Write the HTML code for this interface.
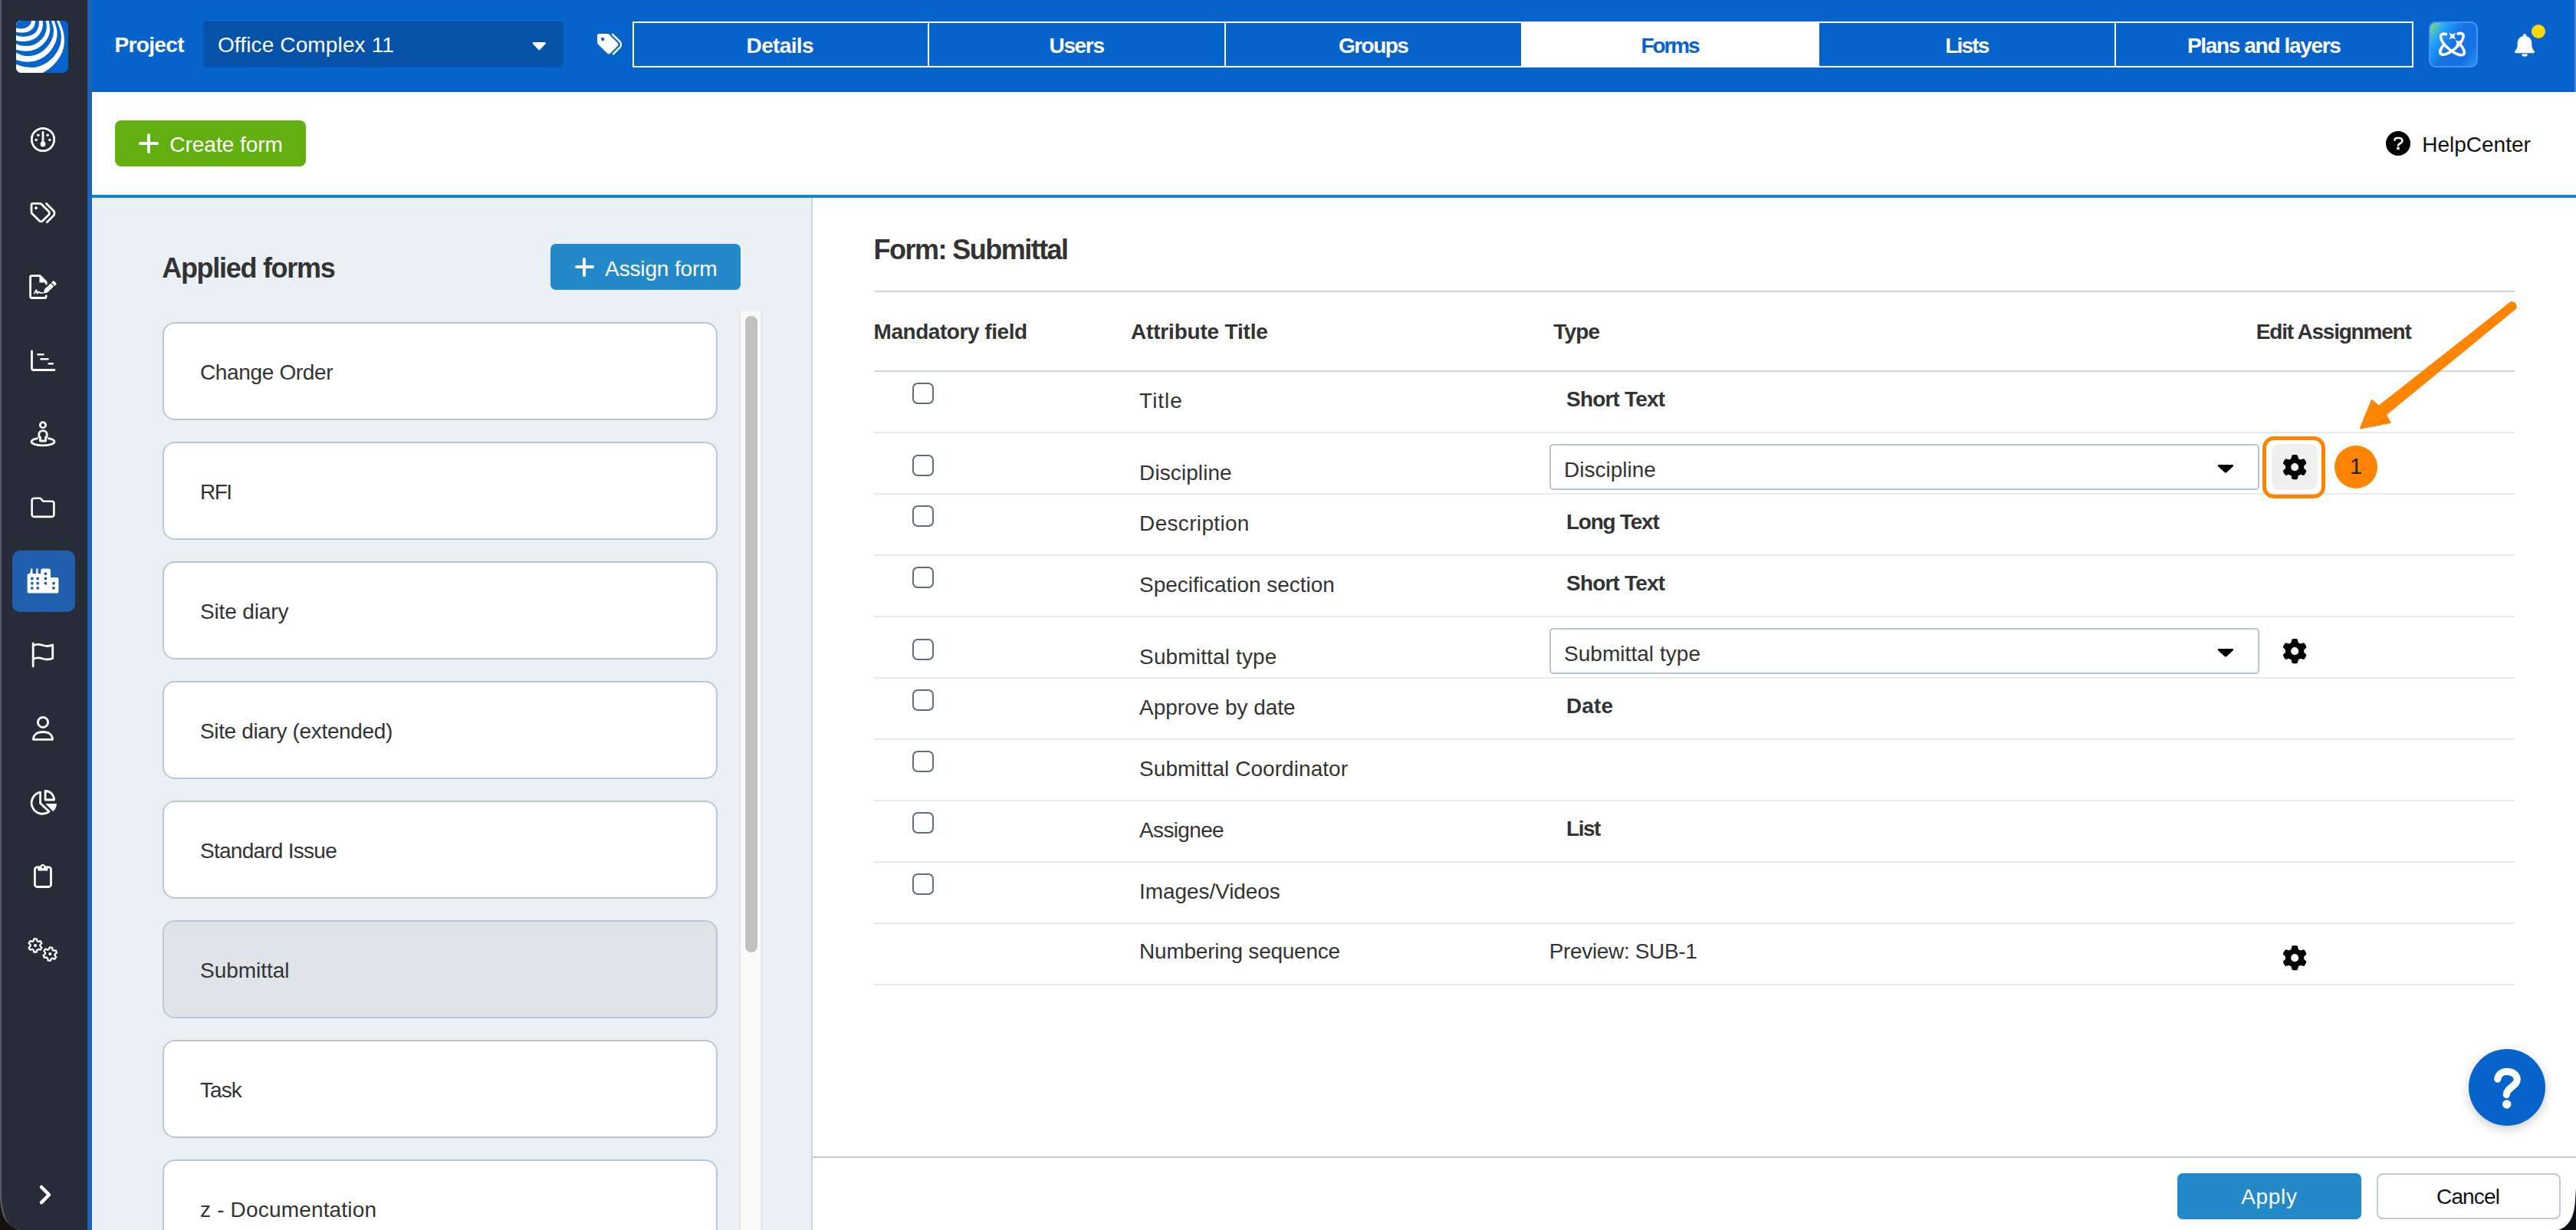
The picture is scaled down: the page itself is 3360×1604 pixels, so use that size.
<!DOCTYPE html>
<html><head><meta charset="utf-8"><title>Forms</title>
<style>
*{box-sizing:border-box;margin:0;padding:0}
html,body{width:3360px;height:1604px;overflow:hidden;background:#fff;font-family:"Liberation Sans",sans-serif}
.a{position:absolute}
.t{position:absolute;white-space:pre}
svg{position:absolute;overflow:visible}
.card{position:absolute;left:212px;width:724px;height:128px;border:2px solid #b9c8d8;border-radius:16px;background:#fff}
.ln{position:absolute;left:1140px;width:2140px;height:2px;background:#e3eaf1}
.cb{position:absolute;left:1190.200px;width:27.400px;height:27.400px;border:2px solid #5f6c7b;border-radius:7px;background:#fff}
.sel{position:absolute;left:2021px;width:926px;height:60px;border:2px solid #b7c5d3;border-radius:5px;background:#fff}
#root{position:absolute;left:0;top:0;width:3360px;height:1604px;overflow:hidden;background:#fff}
</style></head><body><div id="root">
<!-- base panels -->
<div class="a" style="left:0;top:0;width:2px;height:1604px;background:#555b63"></div>
<div class="a" style="left:2px;top:0;width:112px;height:1604px;background:#262c38"></div>
<div class="a" style="left:114px;top:0;width:6px;height:1604px;background:#1f63b5"></div>
<div class="a" style="left:120px;top:0;width:3240px;height:120px;background:#0563cb"></div>
<div class="a" style="left:120px;top:254px;width:3240px;height:4px;background:#1c84c6"></div>
<div class="a" style="left:120px;top:258px;width:940px;height:1346px;background:#ebf0f5;border-right:2px solid #c9d6e3"></div>
<!-- project selector -->
<div class="a" style="left:265px;top:28px;width:469.500px;height:60px;background:#0652a8;border-radius:5px"></div>
<svg style="left:694px;top:54.200px" width="18.600" height="12" viewBox="0 0 24 13" preserveAspectRatio="none"><path d="M2.2 1.2h19.6a1.3 1.3 0 0 1 .9 2.2l-9.6 8.6a1.6 1.6 0 0 1-2.2 0L1.3 3.4a1.3 1.3 0 0 1 .9-2.2z" fill="#fff"/></svg>
<!-- tag icon -->
<svg style="left:778px;top:43px" width="34" height="30" viewBox="0 0 34 30">
<path d="M3.2 1h11.2a3 3 0 0 1 2.1.9l10.6 10.6a3.6 3.6 0 0 1 0 5.1l-8.5 8.5a3.6 3.6 0 0 1-5.1 0L1.9 14.5A3 3 0 0 1 1 12.4V3.2A2.2 2.2 0 0 1 3.2 1z" fill="#fff"/>
<circle cx="8.1" cy="8" r="2.2" fill="#0563cb"/>
<path d="M21 1.8L30.4 11.2a5.4 5.4 0 0 1 0 7.6L22 27.4" fill="none" stroke="#fff" stroke-width="2.4" stroke-linecap="round"/>
</svg>
<!-- tabs -->
<div class="a" style="left:825px;top:28px;width:2323px;height:60px;border:2px solid #fff"></div>
<div class="a" style="left:1210px;top:28px;width:2px;height:60px;background:#fff"></div>
<div class="a" style="left:1597px;top:28px;width:2px;height:60px;background:#fff"></div>
<div class="a" style="left:1984px;top:28px;width:389px;height:60px;background:#fff"></div>
<div class="a" style="left:2758px;top:28px;width:2px;height:60px;background:#fff"></div>
<!-- AI button -->
<div class="a" style="left:3168px;top:28px;width:64px;height:60px;border:2px solid #4792f6;border-radius:9px;background:linear-gradient(125deg,#8fe26a 0%,#22a4fc 22%,#1672e2 48%,#1672e2 78%,#2a94f8 100%)"></div>
<svg style="left:3181px;top:41px" width="37" height="34" viewBox="0 0 37 34">
<g fill="none" stroke="#fff" stroke-width="3.6" stroke-linecap="round">
<path d="M9.5 3.6C5.2 2.4 2.2 3.6 2.6 7.4c.5 4.6 5.2 11.2 11.8 16.4 6.8 5.300 14.600 8.400 17.600 6.400 2.800-1.900.9-7.200-3.100-12.200"/>
<path d="M25 2.900c4.400-1.300 7.400-.2 7.100 3.500-.4 4.700-5.300 11.500-12.100 16.900C13 28.900 5.600 31.800 2.900 29.400.6 27.400 2.300 22.600 6.400 17.600"/>
</g>
<path d="M17.800 0.200l1.700 4.300 4.300 1.700-4.300 1.700-1.700 4.300-1.700-4.300-4.300-1.700 4.300-1.700z" fill="#fff" transform="rotate(45 17.800 6.200)"/>
<path d="M25.600 9.600l1.500 3.800 3.800 1.500-3.800 1.500-1.500 3.800-1.500-3.800-3.800-1.500 3.800-1.500z" fill="#fff" transform="rotate(45 25.600 14.900)"/>
</svg>
<!-- bell -->
<svg style="left:3279px;top:44px" width="28" height="30" viewBox="0 0 28 30">
<path d="M14 0a2 2 0 0 1 2 2v.9c4.300.9 7.300 4.700 7.300 9.300v2.300c0 2.800 1 5.500 2.800 7.600l.5.600a1.500 1.500 0 0 1-1.100 2.500H2.500a1.500 1.500 0 0 1-1.100-2.500l.5-.6c1.800-2.100 2.800-4.800 2.800-7.600v-2.300c0-4.600 3-8.400 7.300-9.300V2a2 2 0 0 1 2-2z" fill="#fff"/>
<path d="M10.100 26.500h7.800a3.900 3.300 0 0 1-7.800 0z" fill="#fff"/>
</svg>
<div class="a" style="left:3302px;top:32px;width:18px;height:18px;border-radius:50%;background:#fdd807"></div>
<!-- create form button -->
<div class="a" style="left:150px;top:157px;width:249px;height:60px;background:#61b00f;border-radius:8px"></div>
<div class="a" style="left:181px;top:185.300px;width:26px;height:4.200px;background:#fff;border-radius:2px"></div>
<div class="a" style="left:191.900px;top:173.900px;width:4.200px;height:26px;background:#fff;border-radius:2px"></div>
<!-- helpcenter icon -->
<div class="a" style="left:3112px;top:171px;width:32px;height:32px;border-radius:50%;background:#000"></div>
<svg style="left:3112px;top:171px" width="32" height="32" viewBox="0 0 32 32"><path d="M11.400 11.600c.4-1.700 1.800-2.600 3.400-2.600h2.600c2.300 0 4 1.600 4 3.500 0 1.500-.8 2.500-2 3.200l-2.300 1.400c-.7.400-1 .9-1 1.700" fill="none" stroke="#fff" stroke-width="2.600" stroke-linecap="round" stroke-linejoin="round"/><circle cx="16" cy="22.400" r="2" fill="#fff"/></svg>

<div class="a" style="left:3358px;top:0;width:2px;height:120px;background:#4a86d4"></div>

<!-- logo -->
<svg style="left:21px;top:27px" width="68" height="68" viewBox="0 0 68.100 68.100">
<defs><clipPath id="lg"><rect x="0" y="0" width="68.100" height="68.100" rx="6.500"/></clipPath></defs>
<g clip-path="url(#lg)">
<rect width="69" height="69" fill="#0563cb"/>
<path d="M56.3 0.0C58.0 4.2 60.2 8.6 61.3 12.7C62.4 16.8 62.9 20.6 63.0 24.4C63.1 28.2 62.8 31.9 61.9 35.5C61.0 39.1 59.4 42.9 57.8 46.1C56.1 49.2 54.1 51.7 51.9 54.3C49.8 56.8 47.8 59.0 44.9 61.3C42.0 63.6 38.1 65.9 34.7 68.1L0 68.100L0 0z" fill="#fff"/>
<path d="M53.1 0.0C54.7 4.2 56.8 8.8 57.8 12.7C58.8 16.6 59.1 19.6 58.9 23.2C58.8 26.8 58.0 30.8 56.6 34.4C55.2 38.0 53.1 41.8 50.8 44.9C48.4 48.0 45.5 50.8 42.6 53.1C39.6 55.3 36.3 57.0 33.2 58.4C30.1 59.7 26.9 60.6 23.8 61.0C20.7 61.4 17.4 61.0 14.5 60.7C11.5 60.4 8.7 59.9 6.3 59.2C3.9 58.6 2.1 57.7 0.0 56.9L-1 56.9L-1 -1L53.1 -1z" fill="#0563cb"/>
<path d="M49.9 0.0C51.0 4.2 52.8 8.9 53.4 12.7C53.9 16.5 53.7 19.4 53.1 22.7C52.5 25.9 51.1 29.0 49.6 32.0C48.0 35.0 46.1 38.2 43.7 40.8C41.4 43.4 38.5 45.9 35.5 47.8C32.6 49.7 29.2 51.2 26.2 52.2C23.1 53.2 20.3 53.5 17.4 53.7C14.5 53.9 11.5 53.8 8.6 53.4C5.7 52.9 2.9 51.8 0.0 51.0L-1 51.0L-1 -1L49.9 -1z" fill="#fff"/>
<path d="M46.1 0.0C47.0 3.6 48.7 7.4 49.0 10.9C49.3 14.5 48.8 18.2 47.8 21.5C46.8 24.8 45.1 28.0 43.1 30.8C41.2 33.7 38.8 36.3 36.1 38.5C33.5 40.6 30.4 42.5 27.3 43.7C24.3 45.0 21.1 45.8 18.0 46.1C14.8 46.3 11.6 45.9 8.6 45.2C5.6 44.5 2.9 42.8 0.0 41.7L-1 41.7L-1 -1L46.1 -1z" fill="#0563cb"/>
<path d="M42.6 0.0C43.1 3.3 44.2 6.8 44.3 9.8C44.4 12.8 44.0 15.2 43.1 18.0C42.3 20.7 40.9 23.6 39.0 26.2C37.2 28.7 34.6 31.2 32.0 33.2C29.5 35.1 26.6 36.8 23.8 37.9C21.1 38.9 18.4 39.4 15.6 39.6C12.9 39.9 10.0 39.6 7.4 39.3C4.8 39.0 2.5 38.4 0.0 37.9L-1 37.9L-1 -1L42.6 -1z" fill="#fff"/>
<path d="M39.0 0.0C39.3 2.9 40.1 5.7 39.9 8.6C39.7 11.5 39.0 14.8 37.9 17.4C36.8 20.0 35.1 22.4 33.2 24.4C31.2 26.5 28.6 28.3 26.2 29.7C23.7 31.0 21.1 32.1 18.6 32.6C16.0 33.1 13.4 33.0 10.9 32.9C8.5 32.8 5.7 32.2 3.9 31.7C2.1 31.2 1.3 30.6 0.0 30.0L-1 30.0L-1 -1L39.0 -1z" fill="#0563cb"/>
<path d="M34.7 0.0C34.7 2.3 35.3 4.2 34.8 6.8C34.4 9.5 33.5 13.1 32.0 15.6C30.6 18.2 28.4 20.4 26.2 22.1C23.9 23.8 21.1 25.0 18.6 25.9C16.0 26.7 13.4 26.9 10.9 27.0C8.5 27.2 5.7 26.9 3.9 26.8C2.1 26.6 1.3 26.2 0.0 25.9L-1 25.9L-1 -1L34.7 -1z" fill="#fff"/>
<path d="M30.1 0.0C29.9 2.5 30.1 4.9 29.4 7.4C28.6 9.9 27.4 13.0 25.6 15.0C23.8 17.0 21.0 18.5 18.6 19.4C16.1 20.4 13.4 20.8 10.9 20.9C8.5 21.0 5.7 20.7 3.9 20.3C2.1 20.0 1.3 19.3 0.0 18.8L-1 18.8L-1 -1L30.1 -1z" fill="#0563cb"/>
<path d="M25.1 0.0C24.7 2.3 24.7 4.8 23.8 6.8C22.9 8.9 21.4 10.8 19.7 12.1C18.1 13.5 16.0 14.5 13.9 15.0C11.7 15.6 9.2 15.6 6.8 15.6C4.5 15.6 2.3 15.2 0.0 15.0L-1 15.0L-1 -1L25.1 -1z" fill="#fff"/>
<path d="M20.2 0.0C19.6 1.5 19.4 3.2 18.6 4.5C17.7 5.8 16.5 7.1 15.0 8.0C13.6 8.9 11.3 9.7 9.8 10.1C8.2 10.5 7.3 10.6 5.7 10.5C4.0 10.4 1.9 9.8 0.0 9.5L-1 9.5L-1 -1L20.2 -1z" fill="#0563cb"/>
</g></svg>
<!-- 1 gauge -->
<svg style="left:38px;top:164px" width="36" height="36" viewBox="0 0 36 36" fill="none" stroke="#fff">
<circle cx="18" cy="18" r="14.700" stroke-width="2.800"/>
<path d="M18 8.500V22" stroke-width="2.800" stroke-linecap="round"/>
<circle cx="18" cy="24" r="3.400" fill="#fff" stroke="none"/>
<g fill="#fff" stroke="none"><circle cx="9.200" cy="18.500" r="1.800"/><circle cx="11.800" cy="12.200" r="1.800"/><circle cx="24.200" cy="12.200" r="1.800"/><circle cx="26.800" cy="18.500" r="1.800"/></g>
</svg>
<!-- 2 tags -->
<svg style="left:39px;top:262.600px" width="34" height="30" viewBox="0 0 34 30" fill="none" stroke="#fff" stroke-width="2.800" stroke-linejoin="round" stroke-linecap="round">
<path d="M3.800 2.400h9.400a2.600 2.600 0 0 1 1.800.8l9.600 9.600a3 3 0 0 1 0 4.200l-8 8a3 3 0 0 1-4.200 0L2.800 15.400a2.600 2.600 0 0 1-.8-1.800V4.200A1.800 1.800 0 0 1 3.800 2.400z"/>
<circle cx="8" cy="8.200" r="1.900" fill="#fff" stroke="none"/>
<path d="M21.500 2.400l9 9a5 5 0 0 1 0 7.200l-8.200 8.200"/>
</svg>
<!-- 3 file-signature -->
<svg style="left:37px;top:357px" width="40" height="36" viewBox="0 0 40 36" fill="none" stroke="#fff" stroke-width="2.800" stroke-linejoin="round" stroke-linecap="round">
<path d="M23.200 29V29.800a1.700 1.700 0 0 1-1.700 1.700H4.300a1.700 1.700 0 0 1-1.700-1.700V4.300a1.700 1.700 0 0 1 1.700-1.700H15l8.200 8.200v2.200"/>
<path d="M15 3.200v7.600h7.600z" fill="#fff" stroke-width="1.200"/>
<path d="M7.600 25.700c.9-.4 1.500-2.100 2.100-3.800.4-1.100.9-.7 1.100.2l.5 2.900c.2.800.7.700 1 0l.8-1.300c.3-.5.700-.4.900 0 .4.800 1 1.100 2 1.100h2.400" stroke-width="1.800"/>
<path d="M19.500 25.800L21.200 20 29 12.400 33 16.600 25.200 24.200z" fill="#fff" stroke="none"/>
<path d="M29.900 11.500L31.700 9.700a1.500 1.500 0 0 1 2.100 0L36.100 12a1.500 1.500 0 0 1 0 2.100L34.300 15.900z" fill="#fff" stroke="none"/>
</svg>
<!-- 4 gantt -->
<svg style="left:39px;top:455px" width="34" height="30" viewBox="0 0 34 30" fill="none" stroke="#fff" stroke-width="2.800" stroke-linecap="round" stroke-linejoin="round">
<path d="M2.500 3V25a2.500 2.500 0 0 0 2.500 2.500h27"/>
<path d="M10.500 7.200h7M14.500 13.300h9M24.600 19.300h5.200" stroke-width="2.600"/>
</svg>
<!-- 5 street view -->
<svg style="left:39px;top:549px" width="34" height="34" viewBox="0 0 34 34" fill="none" stroke="#fff" stroke-width="2.800" stroke-linecap="round" stroke-linejoin="round">
<circle cx="17" cy="5.300" r="3.600"/>
<path d="M17 12.600c3 0 5.200 2 5.200 4.800v1.800c0 1-.6 1.600-1.600 1.800v5h-7.200v-5c-1-.2-1.600-.8-1.600-1.800v-1.800c0-2.800 2.200-4.800 5.200-4.800z"/>
<path d="M9.800 22.600C5 23.500 2 25.200 2 27c0 2.700 6.700 4.900 15 4.900s15-2.200 15-4.900c0-1.800-3-3.500-7.800-4.400"/>
</svg>
<!-- 6 folder -->
<svg style="left:40px;top:647.600px" width="32" height="28.200" viewBox="0 0 34 30" fill="none" stroke="#fff" stroke-width="2.800" stroke-linejoin="round">
<path d="M4.500 1.800h8.200a2 2 0 0 1 1.500.7l2.600 2.900a2 2 0 0 0 1.500.7h11.200a2.800 2.800 0 0 1 2.800 2.800v15.800a2.800 2.800 0 0 1-2.800 2.800h-25a2.800 2.800 0 0 1-2.800-2.800V4.600a2.800 2.800 0 0 1 2.800-2.800z"/>
</svg>
<!-- 7 active: city -->
<div class="a" style="left:16px;top:718px;width:82px;height:80px;border-radius:10px;background:#1f5fae"></div>
<svg style="left:35px;top:741px" width="42" height="33" viewBox="0 0 42 33">
<path d="M5 1.500a1.200 1.200 0 0 1 2.400 0V7h4.800V1.500a1.200 1.200 0 0 1 2.400 0V7h2.400a1.200 1.200 0 0 1 1.200 1.200V3.200A2.600 2.600 0 0 1 20.800.600h7.600a2.600 2.600 0 0 1 2.600 2.600V12h7.800A2.600 2.600 0 0 1 41.400 14.600V30a2.600 2.600 0 0 1-2.600 2.600H3.200A2.600 2.600 0 0 1 .6 30V9.600A2.600 2.600 0 0 1 3.200 7h1z" fill="#fff"/>
<g fill="#1f5fae"><circle cx="6.800" cy="13.500" r="1.900"/><circle cx="14.200" cy="13.500" r="1.900"/><circle cx="6.800" cy="19.700" r="1.900"/><circle cx="14.200" cy="19.700" r="1.900"/><circle cx="6.800" cy="25.900" r="1.900"/><circle cx="14.200" cy="25.900" r="1.900"/>
<circle cx="24.400" cy="7.200" r="1.900"/><circle cx="24.400" cy="13.500" r="1.900"/><circle cx="24.400" cy="19.700" r="1.900"/><circle cx="35" cy="19.700" r="1.900"/><circle cx="35" cy="25.900" r="1.900"/></g>
</svg>
<!-- 8 flag -->
<svg style="left:40px;top:837px" width="32" height="34" viewBox="0 0 32 34" fill="none" stroke="#fff" stroke-width="2.800" stroke-linecap="round" stroke-linejoin="round">
<path d="M3.200 1.800V32"/>
<path d="M3.200 5c4-2 8-2 12.500-.500s8.500 1.500 13-.500v17.500c-4.500 2-8.500 2-13 .5s-8.500-1.500-12.500.5"/>
</svg>
<!-- 9 user -->
<svg style="left:41px;top:933px" width="30" height="34" viewBox="0 0 30 34" fill="none" stroke="#fff" stroke-width="2.800" stroke-linejoin="round">
<circle cx="15" cy="8.900" r="6.600"/>
<path d="M2.500 31.300c0-6.200 5-9.800 12.500-9.800s12.500 3.600 12.500 9.800z"/>
</svg>
<!-- 10 pie -->
<svg style="left:39px;top:1029px" width="36" height="34" viewBox="0 0 36 34" fill="none" stroke="#fff" stroke-width="2.800" stroke-linejoin="round">
<path d="M13.600 4.100A14.200 14.200 0 1 0 25 29.300L13.600 18.600z"/>
<path d="M20.100 2.500A11.500 11.500 0 0 1 31.600 14H20.100z"/>
<path d="M21.500 19.600H34.200C34 23 32.600 26 30.200 28.200z" fill="#fff" stroke-width="1.200"/>
</svg>
<!-- 11 clipboard -->
<svg style="left:43px;top:1125px" width="26" height="34" viewBox="0 0 26 34" fill="none" stroke="#fff" stroke-width="2.800" stroke-linejoin="round">
<rect x="2.400" y="5.900" width="21.100" height="25.600" rx="3"/>
<path d="M6.300 10.400V6.500a2 2 0 0 1 2-2h1.200a3.400 3.400 0 0 1 6.500 0h1.300a2 2 0 0 1 2 2v3.900z" fill="#fff" stroke="none"/>
<circle cx="12.800" cy="5.800" r="1.500" fill="#262c38" stroke="none"/>
</svg>
<!-- 12 cogs -->
<svg style="left:35.900px;top:1222.800px" width="42" height="33" viewBox="0 0 42 33" fill="none" stroke="#fff" stroke-width="2.300" stroke-linejoin="round">
<g><path d="M8.300 1.300h3.400l.7 2.700 1.600.9 2.700-.8 1.700 2.900-2 2 .000 1.800 2 2-1.700 2.900-2.700-.8-1.600.9-.7 2.700H8.300l-.7-2.700-1.600-.9-2.700.8-1.700-2.900 2-2V9L1.600 7l1.700-2.900 2.700.8 1.600-.9z"/><circle cx="10" cy="9.900" r="2" fill="#fff" stroke="none"/></g>
<g transform="translate(19.300 11.200) rotate(8 10 9.900)"><path d="M8.300 1.300h3.400l.7 2.700 1.600.9 2.700-.8 1.700 2.900-2 2 .000 1.800 2 2-1.700 2.900-2.700-.8-1.600.9-.7 2.700H8.300l-.7-2.700-1.600-.9-2.700.8-1.700-2.900 2-2V9L1.600 7l1.700-2.900 2.700.8 1.600-.9z"/><circle cx="10" cy="9.900" r="2" fill="#fff" stroke="none"/></g>
</svg>
<!-- chevron -->
<svg style="left:50px;top:1544px" width="20" height="28" viewBox="0 0 20 28" fill="none" stroke="#fff" stroke-width="4.500" stroke-linecap="round" stroke-linejoin="round"><path d="M4 4L14 14 4 24.200"/></svg>
<!-- window corners -->
<svg style="left:0;top:1560px" width="28" height="44" viewBox="0 0 28 44"><path d="M0 0v44h26.500C12 41 3.500 30 2 0z" fill="#5a6068"/><path d="M0 3C1 18 3.800 28 9 33.500 13 38 17.500 41.500 23.500 44H0z" fill="#15100d"/></svg>
<svg style="left:3334px;top:1550px" width="26" height="54" viewBox="0 0 26 54"><path d="M26 0v54H3C16 50 24 38 25 14z" fill="#0b1018"/></svg>

<div class="a" style="left:718px;top:318px;width:248px;height:60px;background:#2389c9;border-radius:7px"></div>
<div class="a" style="left:749.500px;top:346.300px;width:25.500px;height:4.200px;background:#fff;border-radius:2px"></div>
<div class="a" style="left:760.200px;top:335.700px;width:4.200px;height:25.500px;background:#fff;border-radius:2px"></div>
<div class="card" style="top:420px;background:#fff"></div>
<div class="card" style="top:576px;background:#fff"></div>
<div class="card" style="top:732px;background:#fff"></div>
<div class="card" style="top:888px;background:#fff"></div>
<div class="card" style="top:1044px;background:#fff"></div>
<div class="card" style="top:1200px;background:#dfe4e9"></div>
<div class="card" style="top:1356px;background:#fff"></div>
<div class="card" style="top:1512px;background:#fff"></div>
<div class="a" style="left:964px;top:406px;width:30px;height:1198px;background:#fafafa;border-left:2px solid #e8e8e8;border-right:2px solid #e8e8e8"></div>
<div class="a" style="left:972px;top:412px;width:16px;height:830px;background:#c1c1c1;border-radius:8px"></div>
<div class="ln" style="top:379px;background:#cbd8e4"></div>
<div class="ln" style="top:483px;background:#cbd8e4"></div>
<div class="ln" style="top:563px"></div>
<div class="ln" style="top:643px"></div>
<div class="ln" style="top:723px"></div>
<div class="ln" style="top:803px"></div>
<div class="ln" style="top:883px"></div>
<div class="ln" style="top:963px"></div>
<div class="ln" style="top:1043px"></div>
<div class="ln" style="top:1123px"></div>
<div class="ln" style="top:1203px"></div>
<div class="ln" style="top:1283px"></div>
<div class="cb" style="top:499.3px"></div>
<div class="cb" style="top:593.3px"></div>
<div class="cb" style="top:659.3px"></div>
<div class="cb" style="top:739.3px"></div>
<div class="cb" style="top:833.3px"></div>
<div class="cb" style="top:899.3px"></div>
<div class="cb" style="top:979.3px"></div>
<div class="cb" style="top:1059.3px"></div>
<div class="cb" style="top:1139.3px"></div>
<div class="sel" style="top:579px"></div>
<svg style="left:2892px;top:605px" width="22" height="12" viewBox="0 0 21.400 11.600"><path d="M2 1h17.400a1.200 1.200 0 0 1 .8 2.100l-8.500 7.700a1.500 1.500 0 0 1-2 0L1.200 3.100A1.200 1.200 0 0 1 2 1z" fill="#000"/></svg>
<div class="sel" style="top:819px"></div>
<svg style="left:2892px;top:845px" width="22" height="12" viewBox="0 0 21.400 11.600"><path d="M2 1h17.400a1.200 1.200 0 0 1 .8 2.100l-8.500 7.700a1.500 1.500 0 0 1-2 0L1.200 3.100A1.200 1.200 0 0 1 2 1z" fill="#000"/></svg>
<div class="a" style="left:2951px;top:569px;width:82px;height:81px;border:5.500px solid #ff8400;border-radius:15px"></div>
<div class="a" style="left:2963px;top:579px;width:60px;height:60px;border-radius:9px;background:#f0f0f0"></div>
<svg style="left:2977.05px;top:592.85px" width="32.3" height="32.3" viewBox="0 0 512 512"><path d="M495.900 166.600c3.200 8.700 .5 18.400-6.400 24.600l-43.300 39.400c1.100 8.300 1.700 16.800 1.700 25.400s-.6 17.100-1.700 25.400l43.300 39.400c6.900 6.200 9.600 15.900 6.400 24.600c-4.400 11.900-9.700 23.300-15.800 34.300l-4.700 8.100c-6.600 11-14 21.400-22.100 31.200c-5.900 7.200-15.700 9.600-24.500 6.800l-55.700-17.700c-13.400 10.300-28.200 18.900-44 25.400l-12.500 57.100c-2 9.100-9 16.300-18.200 17.800c-13.800 2.300-28 3.500-42.500 3.500s-28.700-1.200-42.500-3.500c-9.200-1.500-16.200-8.700-18.200-17.800l-12.500-57.100c-15.800-6.500-30.600-15.100-44-25.400L83.100 425.900c-8.800 2.800-18.600 .3-24.500-6.800c-8.100-9.800-15.500-20.200-22.100-31.200l-4.700-8.100c-6.100-11-11.400-22.400-15.800-34.300c-3.200-8.700-.5-18.400 6.400-24.600l43.300-39.400C64.600 273.100 64 264.600 64 256s.6-17.100 1.700-25.400L22.400 191.200c-6.900-6.200-9.600-15.900-6.400-24.600c4.400-11.900 9.700-23.300 15.800-34.300l4.700-8.100c6.600-11 14-21.400 22.100-31.200c5.900-7.200 15.700-9.600 24.500-6.800l55.700 17.700c13.400-10.300 28.200-18.900 44-25.400l12.500-57.100c2-9.100 9-16.300 18.200-17.800C227.300 1.200 241.500 0 256 0s28.700 1.200 42.500 3.500c9.200 1.500 16.200 8.700 18.200 17.800l12.500 57.100c15.800 6.500 30.600 15.100 44 25.400l55.700-17.700c8.800-2.800 18.600-.3 24.500 6.800c8.100 9.800 15.500 20.200 22.100 31.200l4.700 8.100c6.100 11 11.400 22.400 15.800 34.300zM256 336a80 80 0 1 0 0-160 80 80 0 1 0 0 160z" fill="#000"/></svg>
<svg style="left:2977.05px;top:832.85px" width="32.3" height="32.3" viewBox="0 0 512 512"><path d="M495.900 166.600c3.200 8.700 .5 18.400-6.400 24.600l-43.300 39.400c1.100 8.300 1.700 16.800 1.700 25.400s-.6 17.100-1.700 25.400l43.300 39.400c6.900 6.200 9.600 15.900 6.400 24.600c-4.400 11.900-9.700 23.300-15.800 34.300l-4.700 8.100c-6.600 11-14 21.400-22.100 31.200c-5.900 7.200-15.700 9.600-24.500 6.800l-55.700-17.700c-13.400 10.300-28.200 18.900-44 25.400l-12.500 57.100c-2 9.100-9 16.300-18.200 17.800c-13.800 2.300-28 3.500-42.500 3.500s-28.700-1.200-42.500-3.500c-9.200-1.500-16.200-8.700-18.200-17.800l-12.500-57.100c-15.800-6.500-30.600-15.100-44-25.400L83.100 425.900c-8.800 2.800-18.600 .3-24.500-6.800c-8.100-9.800-15.500-20.200-22.100-31.200l-4.700-8.100c-6.100-11-11.400-22.400-15.800-34.300c-3.200-8.700-.5-18.400 6.400-24.600l43.300-39.400C64.600 273.100 64 264.600 64 256s.6-17.100 1.700-25.400L22.400 191.200c-6.900-6.200-9.600-15.900-6.400-24.600c4.400-11.900 9.700-23.300 15.800-34.300l4.700-8.100c6.600-11 14-21.400 22.100-31.200c5.900-7.200 15.700-9.600 24.500-6.800l55.700 17.700c13.400-10.300 28.200-18.900 44-25.400l12.500-57.100c2-9.100 9-16.300 18.200-17.800C227.300 1.200 241.500 0 256 0s28.700 1.200 42.500 3.500c9.200 1.500 16.200 8.700 18.200 17.800l12.500 57.100c15.800 6.500 30.600 15.100 44 25.400l55.700-17.700c8.800-2.800 18.600-.3 24.500 6.800c8.100 9.800 15.500 20.200 22.100 31.200l4.700 8.100c6.100 11 11.400 22.400 15.800 34.300zM256 336a80 80 0 1 0 0-160 80 80 0 1 0 0 160z" fill="#000"/></svg>
<svg style="left:2977.05px;top:1232.55px" width="32.3" height="32.3" viewBox="0 0 512 512"><path d="M495.900 166.600c3.200 8.700 .5 18.400-6.400 24.600l-43.300 39.400c1.100 8.300 1.700 16.800 1.700 25.400s-.6 17.100-1.700 25.400l43.300 39.400c6.900 6.200 9.600 15.900 6.400 24.600c-4.400 11.900-9.700 23.300-15.800 34.300l-4.700 8.100c-6.600 11-14 21.400-22.100 31.200c-5.900 7.200-15.700 9.600-24.500 6.800l-55.700-17.700c-13.400 10.300-28.200 18.900-44 25.400l-12.500 57.100c-2 9.100-9 16.300-18.200 17.800c-13.800 2.300-28 3.500-42.500 3.500s-28.700-1.200-42.500-3.500c-9.200-1.500-16.200-8.700-18.200-17.800l-12.500-57.100c-15.800-6.500-30.600-15.100-44-25.400L83.100 425.900c-8.800 2.800-18.600 .3-24.500-6.800c-8.100-9.800-15.500-20.200-22.100-31.200l-4.700-8.100c-6.100-11-11.400-22.400-15.800-34.300c-3.200-8.700-.5-18.400 6.400-24.600l43.300-39.400C64.600 273.100 64 264.600 64 256s.6-17.100 1.700-25.400L22.400 191.200c-6.900-6.200-9.600-15.900-6.400-24.600c4.400-11.900 9.700-23.300 15.800-34.300l4.700-8.100c6.600-11 14-21.400 22.100-31.200c5.900-7.200 15.700-9.600 24.500-6.800l55.700 17.700c13.400-10.300 28.200-18.900 44-25.400l12.500-57.100c2-9.100 9-16.300 18.200-17.800C227.300 1.200 241.500 0 256 0s28.700 1.200 42.500 3.500c9.200 1.500 16.200 8.700 18.200 17.800l12.500 57.100c15.800 6.500 30.600 15.100 44 25.400l55.700-17.700c8.800-2.800 18.600-.3 24.500 6.800c8.100 9.800 15.500 20.200 22.100 31.200l4.700 8.100c6.100 11 11.400 22.400 15.800 34.300zM256 336a80 80 0 1 0 0-160 80 80 0 1 0 0 160z" fill="#000"/></svg>
<div class="a" style="left:3045px;top:581px;width:56px;height:56px;border-radius:50%;background:#ff8400"></div>
<svg style="left:0;top:0" width="3360" height="1604" viewBox="0 0 3360 1604"><path d="M3078.900 558.400L3093.600 522 3102.900 529.800 3275.400 394.100Q3281.900 394.700 3281.600 401.800L3111.700 540.800 3117.600 551z" fill="#ff8400" stroke="#ff8400" stroke-width="2" stroke-linejoin="round"/></svg>
<div class="a" style="left:1060px;top:1508px;width:2300px;height:2px;background:#bccad9"></div>
<div class="a" style="left:2840px;top:1530px;width:240px;height:60px;background:#2389c9;border-radius:7px"></div>
<div class="a" style="left:3100px;top:1530px;width:240px;height:60px;background:#fff;border:2px solid #bccad9;border-radius:8px"></div>
<div class="a" style="left:3220px;top:1368px;width:100px;height:100px;border-radius:50%;background:#0563cb;box-shadow:0 4px 14px rgba(0,0,0,.2)"></div>
<svg style="left:0;top:0" width="3360" height="1604" viewBox="0 0 3360 1604"><path d="M3257.800 1407.200C3258.500 1401 3263.500 1397.300 3270 1397.300 3277.500 1397.300 3283.200 1401.800 3283.200 1408 3283.200 1416 3269.600 1418.500 3269.300 1427.600" fill="none" stroke="#fff" stroke-width="9.200" stroke-linecap="round"/><circle cx="3269.700" cy="1440" r="5.700" fill="#fff"/></svg>
<span class="t" style="left:149.5px;top:45.4px;font-size:28px;line-height:28px;font-weight:700;color:#fff;letter-spacing:-0.656px">Project</span>
<span class="t" style="left:283.9px;top:45.4px;font-size:28px;line-height:28px;font-weight:400;color:#fff;letter-spacing:0.142px">Office Complex 11</span>
<span class="t" style="left:973.6px;top:45.9px;font-size:28px;line-height:28px;font-weight:700;color:#fff;letter-spacing:-0.638px">Details</span>
<span class="t" style="left:1368.5px;top:45.9px;font-size:28px;line-height:28px;font-weight:700;color:#fff;letter-spacing:-1.336px">Users</span>
<span class="t" style="left:1745.9px;top:45.9px;font-size:28px;line-height:28px;font-weight:700;color:#fff;letter-spacing:-1.513px">Groups</span>
<span class="t" style="left:2140.6px;top:45.9px;font-size:28px;line-height:28px;font-weight:700;color:#0563cb;letter-spacing:-2.145px">Forms</span>
<span class="t" style="left:2537.3px;top:45.9px;font-size:28px;line-height:28px;font-weight:700;color:#fff;letter-spacing:-1.84px">Lists</span>
<span class="t" style="left:2852.9px;top:45.9px;font-size:28px;line-height:28px;font-weight:700;color:#fff;letter-spacing:-1.334px">Plans and layers</span>
<span class="t" style="left:221.3px;top:175.1px;font-size:28px;line-height:28px;font-weight:400;color:#fff;letter-spacing:-0.023px">Create form</span>
<span class="t" style="left:3159.3px;top:174.6px;font-size:28px;line-height:28px;font-weight:400;color:#111;letter-spacing:-0.016px">HelpCenter</span>
<span class="t" style="left:211.2px;top:331.8px;font-size:36px;line-height:36px;font-weight:700;color:#333;letter-spacing:-1.285px">Applied forms</span>
<span class="t" style="left:789.1px;top:336.7px;font-size:28px;line-height:28px;font-weight:400;color:#fff;letter-spacing:-0.143px">Assign form</span>
<span class="t" style="left:261.0px;top:471.5px;font-size:28px;line-height:28px;font-weight:400;color:#333;letter-spacing:-0.349px">Change Order</span>
<span class="t" style="left:261.0px;top:627.5px;font-size:28px;line-height:28px;font-weight:400;color:#333;letter-spacing:-1.555px">RFI</span>
<span class="t" style="left:261.0px;top:783.5px;font-size:28px;line-height:28px;font-weight:400;color:#333;letter-spacing:-0.147px">Site diary</span>
<span class="t" style="left:261.0px;top:939.5px;font-size:28px;line-height:28px;font-weight:400;color:#333;letter-spacing:-0.353px">Site diary (extended)</span>
<span class="t" style="left:261.0px;top:1095.5px;font-size:28px;line-height:28px;font-weight:400;color:#333;letter-spacing:-0.742px">Standard Issue</span>
<span class="t" style="left:261.0px;top:1251.5px;font-size:28px;line-height:28px;font-weight:400;color:#333;letter-spacing:-0.04px">Submittal</span>
<span class="t" style="left:261.0px;top:1407.5px;font-size:28px;line-height:28px;font-weight:400;color:#333;letter-spacing:-0.926px">Task</span>
<span class="t" style="left:261.0px;top:1563.5px;font-size:28px;line-height:28px;font-weight:400;color:#333;letter-spacing:0.174px">z - Documentation</span>
<span class="t" style="left:1139.6px;top:308.1px;font-size:36px;line-height:36px;font-weight:700;color:#333;letter-spacing:-1.536px">Form: Submittal</span>
<span class="t" style="left:1139.6px;top:418.9px;font-size:28px;line-height:28px;font-weight:700;color:#333;letter-spacing:-0.459px">Mandatory field</span>
<span class="t" style="left:1475.1px;top:418.9px;font-size:28px;line-height:28px;font-weight:700;color:#333;letter-spacing:-0.199px">Attribute Title</span>
<span class="t" style="left:2026.3px;top:418.9px;font-size:28px;line-height:28px;font-weight:700;color:#333;letter-spacing:-0.827px">Type</span>
<span class="t" style="left:2942.8px;top:418.9px;font-size:28px;line-height:28px;font-weight:700;color:#333;letter-spacing:-1.205px">Edit Assignment</span>
<span class="t" style="left:1486.1px;top:508.9px;font-size:28px;line-height:28px;font-weight:400;color:#333;letter-spacing:0.985px">Title</span>
<span class="t" style="left:2043.0px;top:506.6px;font-size:28px;line-height:28px;font-weight:700;color:#333;letter-spacing:-0.799px">Short Text</span>
<span class="t" style="left:1486.1px;top:602.9px;font-size:28px;line-height:28px;font-weight:400;color:#333;letter-spacing:0.086px">Discipline</span>
<span class="t" style="left:2040.0px;top:598.8px;font-size:28px;line-height:28px;font-weight:400;color:#333;letter-spacing:0.008px">Discipline</span>
<span class="t" style="left:1486.1px;top:668.9px;font-size:28px;line-height:28px;font-weight:400;color:#333;letter-spacing:0.324px">Description</span>
<span class="t" style="left:2043.0px;top:666.6px;font-size:28px;line-height:28px;font-weight:700;color:#333;letter-spacing:-1.248px">Long Text</span>
<span class="t" style="left:1486.1px;top:748.9px;font-size:28px;line-height:28px;font-weight:400;color:#333;letter-spacing:-0.023px">Specification section</span>
<span class="t" style="left:2043.0px;top:746.6px;font-size:28px;line-height:28px;font-weight:700;color:#333;letter-spacing:-0.799px">Short Text</span>
<span class="t" style="left:1486.1px;top:842.9px;font-size:28px;line-height:28px;font-weight:400;color:#333;letter-spacing:0.137px">Submittal type</span>
<span class="t" style="left:2040.0px;top:838.8px;font-size:28px;line-height:28px;font-weight:400;color:#333;letter-spacing:0.044px">Submittal type</span>
<span class="t" style="left:1486.1px;top:908.9px;font-size:28px;line-height:28px;font-weight:400;color:#333;letter-spacing:-0.023px">Approve by date</span>
<span class="t" style="left:2043.0px;top:906.6px;font-size:28px;line-height:28px;font-weight:700;color:#333;letter-spacing:0.099px">Date</span>
<span class="t" style="left:1486.1px;top:988.9px;font-size:28px;line-height:28px;font-weight:400;color:#333;letter-spacing:0.059px">Submittal Coordinator</span>
<span class="t" style="left:1486.1px;top:1068.9px;font-size:28px;line-height:28px;font-weight:400;color:#333;letter-spacing:-0.655px">Assignee</span>
<span class="t" style="left:2043.0px;top:1066.6px;font-size:28px;line-height:28px;font-weight:700;color:#333;letter-spacing:-1.46px">List</span>
<span class="t" style="left:1486.1px;top:1148.9px;font-size:28px;line-height:28px;font-weight:400;color:#333;letter-spacing:-0.085px">Images/Videos</span>
<span class="t" style="left:1486.1px;top:1226.9px;font-size:28px;line-height:28px;font-weight:400;color:#333;letter-spacing:-0.245px">Numbering sequence</span>
<span class="t" style="left:2020.8px;top:1226.9px;font-size:28px;line-height:28px;font-weight:400;color:#333;letter-spacing:-0.356px">Preview: SUB-1</span>
<span class="t" style="left:2923.2px;top:1546.9px;font-size:28px;line-height:28px;font-weight:400;color:#fff;letter-spacing:0.663px">Apply</span>
<span class="t" style="left:3178.0px;top:1546.9px;font-size:28px;line-height:28px;font-weight:400;color:#111;letter-spacing:-0.834px">Cancel</span>
<span class="t" style="left:3065.0px;top:594.3px;font-size:29px;line-height:29px;font-weight:400;color:#222;letter-spacing:0px">1</span>
</div></body></html>
